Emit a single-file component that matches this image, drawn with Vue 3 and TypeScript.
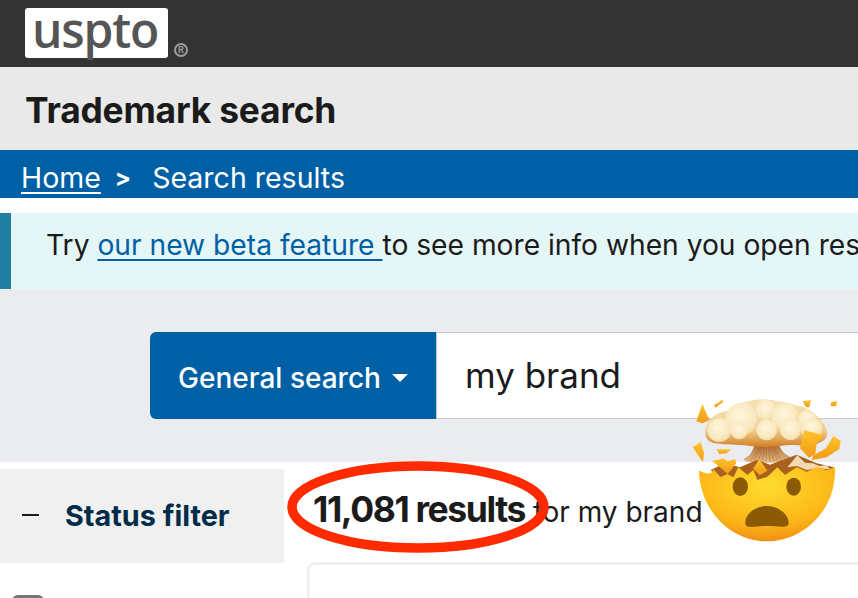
<script setup lang="ts">
const shards: string[] = [
  'M97,72 L110,102 L119,120 L97,130 L79,124 Z',
  'M132,76 L157,59 L161,65 L136,83 Z',
  'M398,63 L423,61 L418,82 L407,81 Z',
  'M484,66 L501,63 L499,78 L482,79 Z',
  'M68,202 L92,186 L102,218 L99,246 Z',
  'M403,151 L460,165 L440,190 L436,222 L417,233 L390,205 Z',
  'M490,168 L512,183 L508,207 L470,232 L425,240 L430,226 L468,205 Z',
  'M126,243 L160,235 L172,244 L195,237 L199,250 L173,282 L150,262 Z',
  'M268,238 L292,272 L270,286 L249,266 Z',
  'M140,208 L183,208 L170,220 L148,222 Z',
]
const ribs: number[] = [240, 252, 264, 276, 288, 300, 312, 324, 336]
</script>

<template>
  <div class="page">
    <header class="topbar">
      <div class="logo">uspto</div>
      <span class="reg">R</span>
    </header>
    <div class="titlebar"><h1>Trademark search</h1></div>
    <nav class="crumbs">
      <a class="home">Home</a>
      <span class="sep">&gt;</span>
      <span>Search results</span>
    </nav>
    <div class="alert">
      <p>Try <a>our new beta feature </a>to see more info when you open results in a new tab or window</p>
    </div>
    <div class="searchrow">
      <button class="scope">General search<i class="caret"></i></button>
      <div class="field">my brand</div>
    </div>
    <main class="results">
      <aside class="side">
        <div class="filter"><span class="dash"></span><strong>Status filter</strong></div>
        <div class="check"></div>
      </aside>
      <section class="content">
        <div class="count"><strong>11,081 results</strong> for my brand</div>
        <div class="card"></div>
      </section>
    </main>

    <svg class="ring" viewBox="0 0 270 96" aria-hidden="true">
      <ellipse cx="133" cy="47" rx="126" ry="41" fill="none" stroke="#ff2a00" stroke-width="9.5" />
    </svg>

    <svg class="emoji" viewBox="0 0 564 540" aria-hidden="true">
      <defs>
        <radialGradient id="face" cx="0.5" cy="0.25" r="0.85">
          <stop offset="0" stop-color="#ffdc2e" />
          <stop offset="0.6" stop-color="#fdb718" />
          <stop offset="1" stop-color="#ea7f12" />
        </radialGradient>
        <radialGradient id="puff" cx="0.45" cy="0.4" r="0.65">
          <stop offset="0" stop-color="#fff6dc" />
          <stop offset="0.7" stop-color="#f9e8c0" />
          <stop offset="1" stop-color="#f0d6a4" />
        </radialGradient>
        <linearGradient id="base" x1="0" y1="0" x2="0" y2="1">
          <stop offset="0" stop-color="#f6e3b6" />
          <stop offset="0.65" stop-color="#f2cf8c" />
          <stop offset="1" stop-color="#d07f24" />
        </linearGradient>
        <linearGradient id="shard" x1="0" y1="0" x2="0" y2="1">
          <stop offset="0" stop-color="#ffc42a" />
          <stop offset="1" stop-color="#f39a16" />
        </linearGradient>
        <linearGradient id="stem" x1="0" y1="0" x2="0" y2="1">
          <stop offset="0" stop-color="#a8622a" />
          <stop offset="1" stop-color="#e8bd88" />
        </linearGradient>
      </defs>

      <path d="M222,236 C245,228 250,205 255,190 L325,190 C332,208 340,222 360,230 C364,244 330,248 290,248 C250,248 218,248 222,236 Z" fill="url(#stem)" />
      <path v-for="x in ribs" :key="x" :d="`M${x},244 Q${(x + 290) / 2},215 ${x * 0.45 + 160},192`" fill="none" stroke="#8f4f1e" stroke-width="2" opacity="0.55" />

      <path d="M122,270 L165,250 L210,262 L260,240 L300,254 L380,224 L440,250 L492,262 L440,300 L300,310 L150,300 Z" fill="#a9611f" />
      <path d="M352,262 L382,226 L405,248 L428,250 L448,258 L470,255 L480,268 L440,265 L410,270 L380,258 Z" fill="#f3d9ae" />

      <path d="M106,160 C106,120 140,96 170,94 C200,70 240,58 285,58 C320,62 350,66 385,78 C420,82 445,110 455,125 C475,145 478,170 460,182 C420,205 390,192 350,196 C320,200 280,204 240,198 C200,192 170,196 135,190 C115,186 106,175 106,160 Z" fill="url(#base)" />
      <circle cx="148" cy="150" r="36" fill="url(#puff)" />
      <circle cx="215" cy="116" r="48" fill="url(#puff)" />
      <circle cx="288" cy="90" r="31" fill="url(#puff)" />
      <circle cx="345" cy="110" r="40" fill="url(#puff)" />
      <circle cx="412" cy="118" r="28" fill="url(#puff)" />
      <circle cx="425" cy="146" r="32" fill="url(#puff)" />
      <circle cx="208" cy="152" r="26" fill="url(#puff)" />
      <circle cx="290" cy="150" r="31" fill="url(#puff)" />
      <circle cx="362" cy="148" r="32" fill="url(#puff)" />

      <path d="M87,272 C105,278 125,290 130,268 L152,292 L172,282 L190,292 L205,262 L232,285 L250,270 L262,300 L292,290 L322,262 L345,285 L380,262 L410,275 L440,262 L470,270 L495,262 C500,390 400,484 291,484 C180,484 90,390 87,272 Z" fill="url(#face)" />
      <ellipse cx="211" cy="320" rx="23" ry="28" fill="#8a5a05" />
      <ellipse cx="371" cy="320" rx="22" ry="27" fill="#8a5a05" />
      <path d="M226,428 C226,400 258,378 290,378 C324,378 356,402 356,428 C356,447 328,438 290,438 C252,438 226,448 226,428 Z" fill="#8a5a05" />

      <path v-for="(d, i) in shards" :key="i" :d="d" fill="url(#shard)" />
    </svg>
  </div>
</template>

<style>
html,
body {
  margin: 0;
  overflow: hidden;
}
</style>

<style scoped>
.page {
  position: relative;
  width: 858px;
  height: 598px;
  overflow: hidden;
  background: #fff;
  font-family: Inter, "Liberation Sans", sans-serif;
  color: #1b1b1b;
}
.topbar {
  height: 67px;
  box-sizing: border-box;
  background: #333;
  padding: 8px 0 0 25px;
  display: flex;
  align-items: flex-start;
}
.logo {
  width: 143px;
  height: 50px;
  box-sizing: border-box;
  background: #fff;
  border-radius: 3px;
  color: #555;
  font-family: "Open Sans", sans-serif;
  font-size: 48px;
  font-weight: 600;
  line-height: 44px;
  letter-spacing: -1.2px;
  padding-left: 7px;
}
.reg {
  margin: 35px 0 0 6px;
  width: 14px;
  height: 14px;
  box-sizing: border-box;
  border: 2px solid #9c9c9c;
  border-radius: 50%;
  line-height: 10px;
  font-size: 9px;
  font-weight: 700;
  text-align: center;
  color: #9c9c9c;
}
.titlebar {
  height: 83px;
  box-sizing: border-box;
  background: #e9e9e9;
  padding: 3px 0 0 25px;
  display: flex;
  align-items: center;
}
h1 {
  margin: 0;
  font-size: 35.4px;
  font-weight: 700;
  letter-spacing: -0.2px;
  color: #1b1b1b;
}
.crumbs {
  height: 48px;
  box-sizing: border-box;
  background: #0060a5;
  color: #fff;
  padding: 6px 0 0 21px;
  display: flex;
  align-items: center;
  font-size: 28.5px;
}
.home {
  text-decoration: underline;
  text-underline-offset: 4px;
  text-decoration-thickness: 2px;
}
.sep {
  margin: 0 21px 0 14px;
  font-weight: 700;
  font-size: 24px;
}
.alert {
  margin-top: 15px;
  height: 76px;
  box-sizing: border-box;
  background: #e5f6f7;
  border-left: 11px solid #1f7ea1;
  padding-left: 35px;
  display: flex;
  align-items: center;
  font-size: 28.2px;
  white-space: nowrap;
}
.alert p {
  margin: 0 0 12px;
}
.alert a {
  color: #0060a5;
  text-decoration: underline;
  text-underline-offset: 4px;
  text-decoration-thickness: 2px;
}
.searchrow {
  height: 173px;
  box-sizing: border-box;
  background: #ebecf0;
  padding: 43px 0 0 150px;
  display: flex;
  align-items: flex-start;
}
.scope {
  width: 286px;
  height: 87px;
  border: 0;
  border-radius: 6px 0 0 6px;
  background: #0060a5;
  color: #fff;
  font: 500 28px Inter, "Liberation Sans", sans-serif;
  padding: 4px 0 0;
  display: flex;
  align-items: center;
  justify-content: center;
}
.caret {
  margin-left: 11px;
  border-left: 8px solid transparent;
  border-right: 8px solid transparent;
  border-top: 8px solid #fff;
}
.field {
  flex: 1;
  height: 87px;
  box-sizing: border-box;
  background: #fff;
  border: 1px solid #c6c6c6;
  border-right: 0;
  padding: 0 0 2px 28px;
  display: flex;
  align-items: center;
  font-size: 35px;
}
.results {
  position: absolute;
  top: 462px;
  left: 0;
  width: 858px;
  height: 136px;
  background: #fff;
  display: flex;
}
.side {
  width: 284px;
  padding-top: 7px;
}
.filter {
  height: 94px;
  box-sizing: border-box;
  background: #f0f0f0;
  padding: 0 0 2px 22px;
  display: flex;
  align-items: center;
  font-size: 28.8px;
  color: #002b49;
  white-space: nowrap;
}
.dash {
  width: 17px;
  height: 2px;
  background: #1b1b1b;
  margin-right: 26px;
}
.check {
  width: 32px;
  height: 32px;
  margin: 32px 0 0 12px;
  background: #757575;
  border-radius: 6px;
}
.content {
  flex: 1;
  padding-left: 23px;
}
.count {
  height: 100px;
  box-sizing: border-box;
  padding: 26px 0 0 6px;
  font-size: 28px;
  white-space: nowrap;
}
.count strong {
  font-size: 35.5px;
  letter-spacing: -1.4px;
  font-weight: 700;
}
.card {
  height: 60px;
  box-sizing: border-box;
  border: 3px solid #f0f0f0;
  border-right: 0;
  border-radius: 8px 0 0 0;
}
.ring {
  position: absolute;
  left: 285px;
  top: 460px;
  width: 270px;
  height: 96px;
}
.emoji {
  position: absolute;
  left: 670px;
  top: 380px;
  width: 188px;
  height: 180px;
}
</style>
